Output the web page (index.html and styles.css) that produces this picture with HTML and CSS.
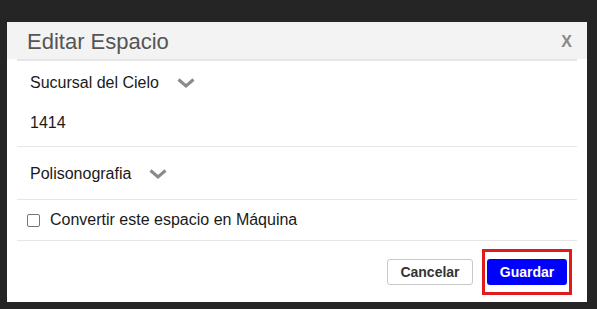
FILE: index.html
```html
<!DOCTYPE html>
<html lang="es">
<head>
<meta charset="utf-8">
<title>Editar Espacio</title>
<link rel="stylesheet" href="styles.css">
</head>
<body>
<div class="dialog">
  <div class="header">
    <span class="title">Editar Espacio</span>
    <span class="close">X</span>
  </div>
  <div class="header-line"></div>
  <div class="content">
    <div class="section sec1">
      <div class="row row-a">
        <span class="label">Sucursal del Cielo</span>
        <svg class="chev" width="18" height="10" viewBox="0 0 18 10"><polyline points="1.5,1.5 9,8 16.5,1.5" fill="none" stroke="#8a8a8a" stroke-width="3"/></svg>
      </div>
      <div class="row row-b"><span class="label">1414</span></div>
    </div>
    <div class="section sec2">
      <div class="row">
        <span class="label">Polisonografia</span>
        <svg class="chev" width="18" height="10" viewBox="0 0 18 10"><polyline points="1.5,1.5 9,8 16.5,1.5" fill="none" stroke="#8a8a8a" stroke-width="3"/></svg>
      </div>
    </div>
    <div class="section sec3">
      <label class="check-row"><span class="box"></span><span class="label">Convertir este espacio en Máquina</span></label>
    </div>
    <div class="footer">
      <button class="btn btn-cancel">Cancelar</button>
      <span class="highlight"><button class="btn btn-save">Guardar</button></span>
    </div>
  </div>
</div>
</body>
</html>
```
FILE: styles.css
```css
html, body {
  margin: 0;
  padding: 0;
  background: #252525;
  font-family: "Liberation Sans", Arial, sans-serif;
}
body {
  padding: 22px 0 0 7px;
  height: 309px;
  box-sizing: border-box;
}
.dialog {
  width: 580px;
  height: 280px;
  background: #fff;
}
.header {
  height: 37px;
  background: #f3f3f3;
  display: flex;
  align-items: center;
  justify-content: space-between;
  padding: 0 15px 0 20px;
}
.title {
  font-size: 22px;
  color: #555;
  line-height: 1;
  margin-top: 3px;
}
.close {
  font-size: 16px;
  font-weight: bold;
  color: #888;
  margin-top: 2px;
}
.header-line {
  height: 2px;
  margin: 0 10px;
  background: #e6e6e6;
}
.content {
  padding: 0 10px;
}
.section {
  border-bottom: 1px solid #e6e6e6;
}
.row {
  display: flex;
  align-items: center;
  padding-left: 13px;
}
.label {
  font-size: 16px;
  color: #1a1a1a;
}
.chev {
  margin-left: 18px;
}
.sec1 {
  height: 85px;
}
.row-a {
  height: 44px;
}
.row-b {
  height: 36px;
}
.sec2 {
  height: 52px;
  display: flex;
  align-items: center;
}
.sec2 .row {
  margin-top: 1px;
}
.sec3 {
  height: 40px;
  display: flex;
  align-items: center;
}
.check-row {
  display: flex;
  align-items: center;
  padding-left: 10px;
}
.box {
  width: 11px;
  height: 11px;
  border: 1px solid #767676;
  border-radius: 2px;
  margin-right: 10px;
  background: #fff;
}
.footer {
  height: 61px;
  display: flex;
  justify-content: flex-end;
  align-items: center;
  padding-right: 5px;
  gap: 9px;
  box-sizing: border-box;
  padding-top: 1px;
}
.btn {
  font-family: "Liberation Sans", Arial, sans-serif;
  font-size: 14px;
  font-weight: bold;
  height: 26px;
  border-radius: 3px;
  padding: 0;
  cursor: pointer;
}
.btn-cancel {
  width: 86px;
  background: #fff;
  border: 1px solid #c8c8c8;
  color: #333;
}
.highlight {
  display: flex;
  border: 3px solid #e01b1b;
  padding: 7px 2px;
}
.btn-save {
  width: 80px;
  background: #0000ff;
  border: none;
  color: #fff;
}
```
